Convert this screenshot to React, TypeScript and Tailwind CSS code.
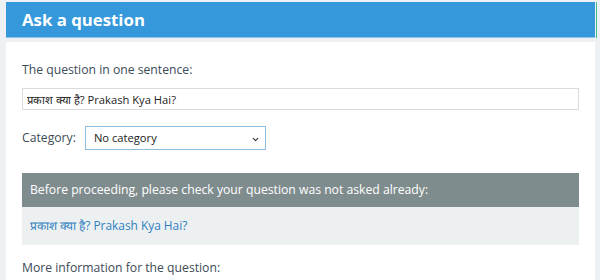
import { ChevronDown } from 'lucide-react';

export default function App() {
  const hindi = 'प्रकाश क्या है?';

  return (
    <div className="w-[600px] h-[280px] overflow-hidden bg-[#eef1f3] font-['Open_Sans',sans-serif] text-[#3c4b57] relative">
      {/* sidebar edge on the right */}
      <div className="absolute right-[3px] top-[2px] w-[1px] h-[36px] bg-[#3fbf8f]" />

      <div className="ml-[6px] w-[589px] pt-[2px]">
        {/* Header */}
        <div className="h-[36px] bg-[#3498db] border-b border-[#8cc4ec] flex items-center px-[16px]">
          <h1 className="text-white text-[16.8px] font-bold">Ask a question</h1>
        </div>

        {/* Body */}
        <div className="mt-[4px] bg-white px-[16px] pt-[19px] pb-[20px]">
          <label className="block text-[12.2px] leading-[18px]">The question in one sentence:</label>
          <input
            type="text"
            defaultValue={`${hindi} Prakash Kya Hai?`}
            className="mt-[9px] block w-[557px] h-[22px] border border-[#d9dcde] px-[4px] text-[11.2px] text-[#222] outline-none"
          />

          <div className="mt-[16px] flex items-center gap-[9px]">
            <span className="text-[12.2px]">Category:</span>
            <div className="relative w-[181px] h-[24px] border border-[#8ebfe0] flex items-center pl-[8px]">
              <span className="text-[11.2px] text-[#222]">No category</span>
              <ChevronDown className="absolute right-[5px] top-[8px] w-[9px] h-[9px] text-[#333]" strokeWidth={3} />
            </div>
          </div>

          <div className="mt-[23px] w-[557px]">
            <div className="h-[34px] bg-[#7f8c8d] flex items-center px-[8px]">
              <span className="text-white text-[12.2px]">Before proceeding, please check your question was not asked already:</span>
            </div>
            <div className="h-[38px] bg-[#ecf0f1] flex items-center px-[8px]">
              <a className="text-[#2f80c0] text-[11.9px]">{hindi} Prakash Kya Hai?</a>
            </div>
          </div>

          <label className="block mt-[14px] text-[12.2px] leading-[18px]">More information for the question:</label>
          <div className="mt-[4px] w-[557px] h-[60px] border border-[#d9dcde]" />
        </div>
      </div>
    </div>
  );
}
